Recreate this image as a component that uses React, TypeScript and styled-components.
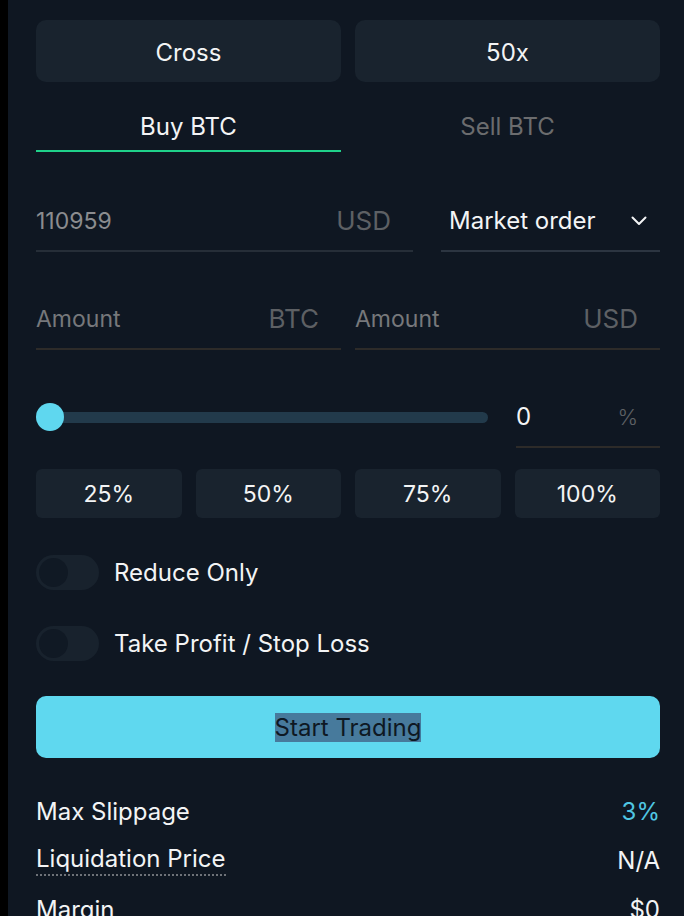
import styled, { createGlobalStyle } from "styled-components";

const GlobalStyle = createGlobalStyle`
  html, body {
    margin: 0;
    background: #000;
    overflow: hidden;
  }
  * {
    box-sizing: border-box;
  }
`;

const Panel = styled.div`
  margin-left: 8px;
  min-height: 100vh;
  background: #0f1722;
  padding: 20px 24px 0 28px;
  font-family: Inter, "Noto Sans", sans-serif;
  font-size: 24px;
  color: #f3f4f5;
`;

const TwoCols = styled.div`
  display: grid;
  grid-template-columns: 1fr 1fr;
  gap: 14px;
`;

const ModeButton = styled.button`
  height: 62px;
  padding-top: 3px;
  border: none;
  border-radius: 10px;
  background: #19232e;
  color: #f3f4f5;
  font-family: inherit;
  font-size: 24px;
`;

const Tabs = styled(TwoCols)`
  margin-top: 16px;
`;

const Tab = styled.div<{ $active?: boolean }>`
  padding: 17px 0 11px;
  line-height: 24px;
  text-align: center;
  color: ${(p) => (p.$active ? "#f3f4f5" : "#6b6c6e")};
  border-bottom: 2px solid ${(p) => (p.$active ? "#1fd18a" : "transparent")};
`;

const OrderRow = styled.div`
  display: grid;
  grid-template-columns: 1fr 219px;
  gap: 28px;
  margin-top: 45px;
`;

const AmountRow = styled(TwoCols)`
  margin-top: 43px;
`;

const Field = styled.div<{ $line?: string }>`
  display: flex;
  align-items: center;
  justify-content: space-between;
  height: 55px;
  padding: 6px 22px 11px 0;
  line-height: 36px;
  border-bottom: 2px solid ${(p) => p.$line || "#262e38"};
`;

const Placeholder = styled.span<{ $tone?: string }>`
  color: ${(p) => p.$tone || "#76787b"};
  font-size: 23px;
`;

const Unit = styled.span<{ $size?: number; $weight?: number }>`
  color: #5d6064;
  font-size: ${(p) => p.$size || 26}px;
  font-weight: ${(p) => p.$weight || 400};
`;

const Select = styled(Field)`
  padding: 6px 13px 11px 8px;
  color: #f3f4f5;
`;

const SliderRow = styled.div`
  display: grid;
  grid-template-columns: 1fr 144px;
  gap: 28px;
  margin-top: 43px;
  align-items: start;
`;

const SliderBox = styled.div`
  display: flex;
  align-items: center;
  height: 36px;
  margin-top: 6px;
`;

const Thumb = styled.div`
  width: 28px;
  height: 28px;
  border-radius: 50%;
  background: #5fd7ef;
  flex-shrink: 0;
  z-index: 1;
`;

const Track = styled.div`
  flex: 1;
  height: 11px;
  margin-left: -14px;
  border-radius: 6px;
  background: #223a4b;
`;

const PercentGrid = styled.div`
  display: grid;
  grid-template-columns: repeat(4, 1fr);
  gap: 14px;
  margin-top: 21px;
`;

const PercentButton = styled.button`
  height: 49px;
  border: none;
  border-radius: 6px;
  background: #19232e;
  color: #f3f4f5;
  font-family: inherit;
  font-size: 23px;
`;

const ToggleRow = styled.div<{ $gap: number }>`
  display: flex;
  align-items: center;
  gap: 15px;
  margin-top: ${(p) => p.$gap}px;
  line-height: 35px;
`;

const ToggleTrack = styled.div`
  display: flex;
  align-items: center;
  width: 63px;
  height: 35px;
  padding: 3px;
  border-radius: 18px;
  background: #18222d;
`;

const ToggleKnob = styled.div`
  width: 29px;
  height: 29px;
  border-radius: 50%;
  background: #101924;
`;

const StartButton = styled.button`
  width: 100%;
  height: 62px;
  margin-top: 35px;
  padding-top: 2px;
  border: none;
  border-radius: 10px;
  background: #5fd8ef;
  font-family: inherit;
  font-size: 24px;
  color: #0e1823;
`;

const Selected = styled.span`
  background: #477a9c;
`;

const Stats = styled.div`
  margin-top: 29px;
`;

const StatRow = styled.div`
  display: flex;
  align-items: center;
  justify-content: space-between;
  height: 49px;
`;

const StatValue = styled.span<{ $accent?: boolean }>`
  color: ${(p) => (p.$accent ? "#4fc6e3" : "#f3f4f5")};
`;

const Dotted = styled.span`
  display: inline-block;
  line-height: 26px;
  padding-bottom: 2px;
  border-bottom: 2px dotted #6e7278;
`;

function Chevron() {
  return (
    <svg width="16" height="10" viewBox="0 0 16 10" fill="none">
      <path d="M1.5 1.5 L8 8 L14.5 1.5" stroke="#f3f4f5" strokeWidth="2" strokeLinecap="round" strokeLinejoin="round" />
    </svg>
  );
}

function Toggle({ label, gap }: { label: string; gap: number }) {
  return (
    <ToggleRow $gap={gap}>
      <ToggleTrack>
        <ToggleKnob />
      </ToggleTrack>
      <span>{label}</span>
    </ToggleRow>
  );
}

const presets = ["25%", "50%", "75%", "100%"];

export default function App() {
  return (
    <>
      <GlobalStyle />
      <Panel>
        <TwoCols>
          <ModeButton>Cross</ModeButton>
          <ModeButton>50x</ModeButton>
        </TwoCols>

        <Tabs>
          <Tab $active>Buy BTC</Tab>
          <Tab>Sell BTC</Tab>
        </Tabs>

        <OrderRow>
          <Field>
            <Placeholder $tone="#8b8c8f">110959</Placeholder>
            <Unit>USD</Unit>
          </Field>
          <Select $line="#2c3541">
            <span>Market order</span>
            <Chevron />
          </Select>
        </OrderRow>

        <AmountRow>
          <Field $line="#2d2b29">
            <Placeholder>Amount</Placeholder>
            <Unit>BTC</Unit>
          </Field>
          <Field $line="#2d2b29">
            <Placeholder>Amount</Placeholder>
            <Unit>USD</Unit>
          </Field>
        </AmountRow>

        <SliderRow>
          <SliderBox>
            <Thumb />
            <Track />
          </SliderBox>
          <Field $line="#2d2b29">
            <span>0</span>
            <Unit $size={22} $weight={300}>%</Unit>
          </Field>
        </SliderRow>

        <PercentGrid>
          {presets.map((p) => (
            <PercentButton key={p}>{p}</PercentButton>
          ))}
        </PercentGrid>

        <Toggle label="Reduce Only" gap={37} />
        <Toggle label="Take Profit / Stop Loss" gap={36} />

        <StartButton>
          <Selected>Start Trading</Selected>
        </StartButton>

        <Stats>
          <StatRow>
            <span>Max Slippage</span>
            <StatValue $accent>3%</StatValue>
          </StatRow>
          <StatRow>
            <Dotted>Liquidation Price</Dotted>
            <StatValue>N/A</StatValue>
          </StatRow>
          <StatRow>
            <span>Margin</span>
            <StatValue>$0</StatValue>
          </StatRow>
        </Stats>
      </Panel>
    </>
  );
}
